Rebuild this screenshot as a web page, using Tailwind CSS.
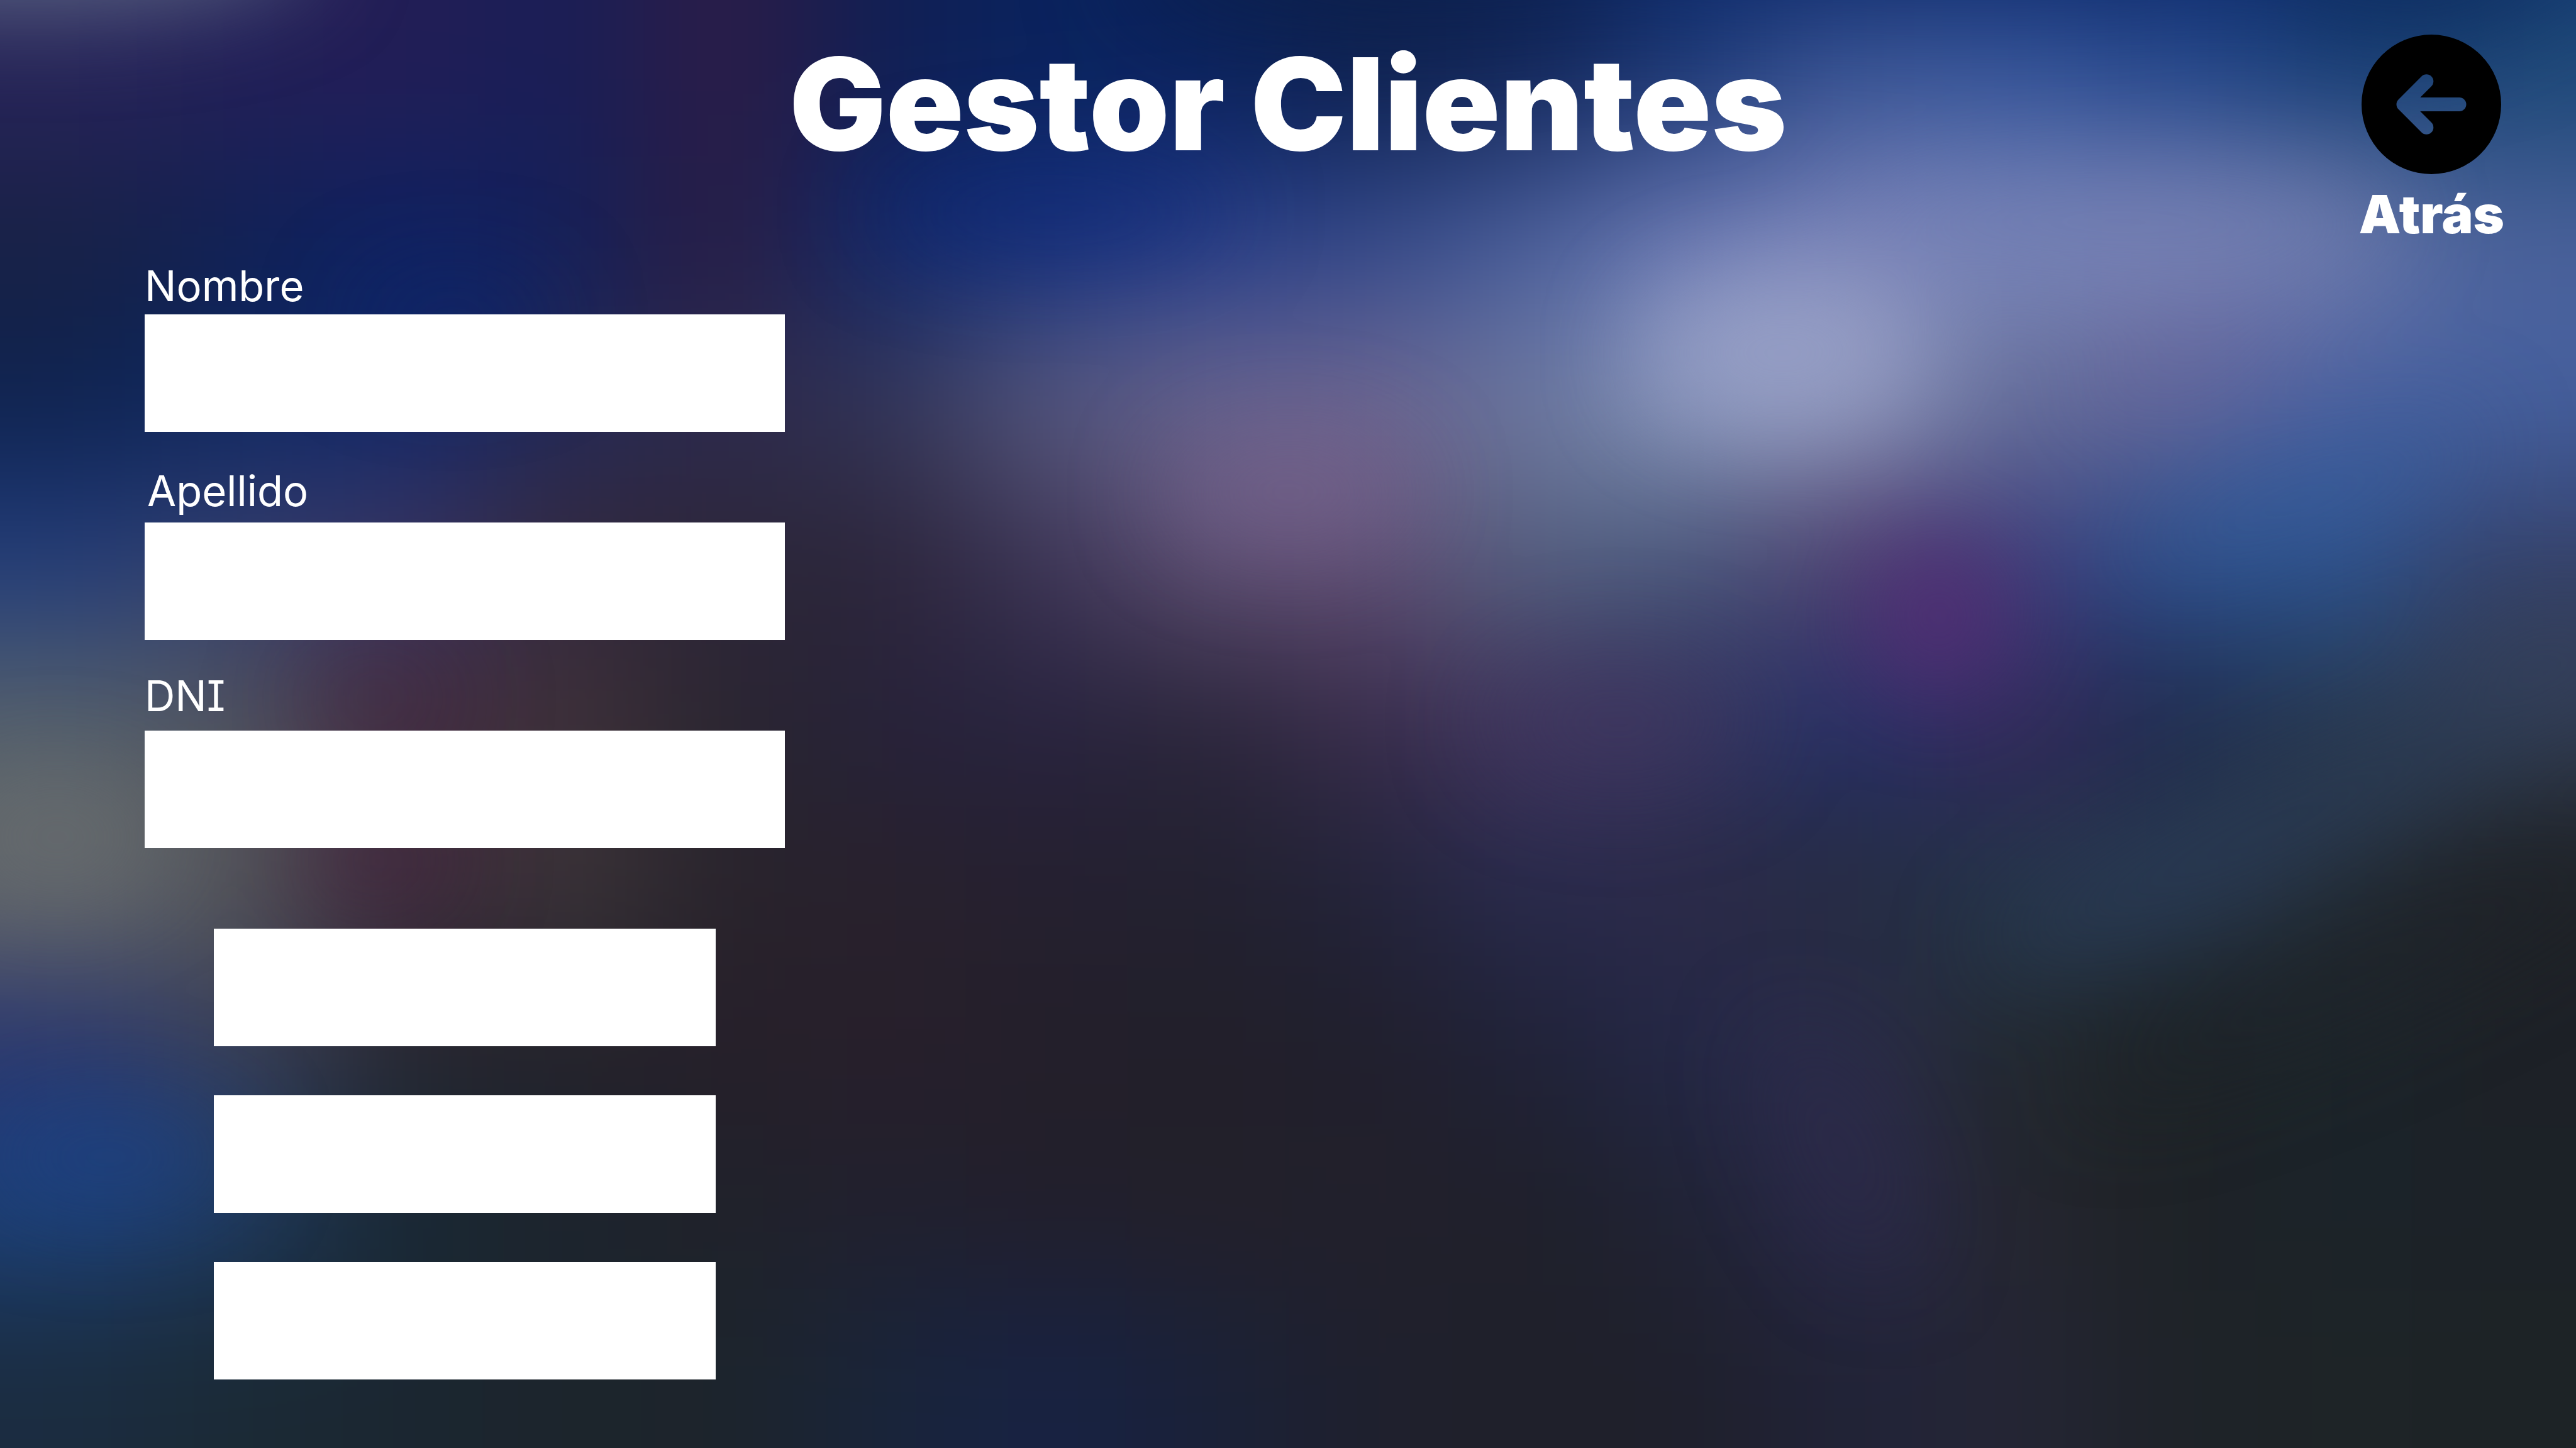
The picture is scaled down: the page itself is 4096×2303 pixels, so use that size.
<!DOCTYPE html>
<html lang="es">
<head>
<meta charset="utf-8">
<meta name="viewport" content="width=device-width, initial-scale=1">
<title>Gestor Clientes</title>
<script src="https://cdn.jsdelivr.net/npm/@tailwindcss/browser@4"></script>
</head>
<body class="min-h-screen bg-[#22202c] text-white">
<div class="relative isolate min-h-screen overflow-hidden">
  <!-- Backdrop: a 16 x 9 colour mesh, softened -->
  <svg class="absolute inset-0 -z-10 size-full" viewBox="0 0 1568 882" preserveAspectRatio="none" aria-hidden="true">
    <defs>
      <filter id="soft" filterUnits="userSpaceOnUse" x="-200" y="-200" width="1968" height="1282" color-interpolation-filters="sRGB"><feGaussianBlur stdDeviation="44"/></filter>
      <filter id="glow" filterUnits="userSpaceOnUse" x="-200" y="-200" width="1968" height="1282" color-interpolation-filters="sRGB"><feGaussianBlur stdDeviation="30"/></filter>
    </defs>
    <g id="mesh" filter="url(#soft)"></g>
    <g filter="url(#glow)">
      <ellipse cx="20" cy="-34" rx="170" ry="38" fill="#5d6784"/>
      <ellipse cx="1180" cy="375" rx="40" ry="46" fill="#552b76" opacity=".85"/>
      <ellipse cx="1085" cy="215" rx="85" ry="46" fill="#9fa8cc" opacity=".65"/>
      <ellipse cx="1290" cy="135" rx="170" ry="34" fill="#7c86b8" opacity=".45"/>
      <ellipse cx="785" cy="300" rx="75" ry="36" fill="#7c668f" opacity=".5"/>
      <ellipse cx="35" cy="510" rx="65" ry="38" fill="#6c7072" opacity=".55"/>
      <ellipse cx="65" cy="705" rx="80" ry="34" fill="#1b4288" opacity=".6"/>
      <ellipse cx="230" cy="425" rx="50" ry="26" fill="#452239" opacity=".4"/>
      <ellipse cx="230" cy="525" rx="46" ry="24" fill="#45223e" opacity=".6"/>
      <ellipse cx="1400" cy="305" rx="120" ry="22" fill="#335f9e" opacity=".45" transform="rotate(-20 1400 305)"/>
      <ellipse cx="1330" cy="222" rx="80" ry="16" fill="#655f97" opacity=".4" transform="rotate(-20 1330 222)"/>
      <ellipse cx="1380" cy="505" rx="190" ry="24" fill="#2c3d59" opacity=".8" transform="rotate(-25 1380 505)"/>
      <ellipse cx="1560" cy="400" rx="70" ry="34" fill="#35415c" opacity=".6"/>
      <ellipse cx="1440" cy="590" rx="190" ry="26" fill="#1e2228" opacity=".7" transform="rotate(-24 1440 590)"/>
      <ellipse cx="985" cy="440" rx="80" ry="40" fill="#42355f" opacity=".55"/>
      <ellipse cx="1200" cy="-26" rx="420" ry="34" fill="#0c2868" opacity=".9"/>
      <ellipse cx="840" cy="-14" rx="160" ry="30" fill="#0c1f4a" opacity=".8"/>
      <ellipse cx="1470" cy="-10" rx="80" ry="36" fill="#0d2c5c" opacity=".7"/>
      <ellipse cx="640" cy="128" rx="110" ry="26" fill="#0a2677" opacity=".5"/>
      <ellipse cx="275" cy="195" rx="60" ry="26" fill="#09246a" opacity=".5"/>
      <ellipse cx="1120" cy="700" rx="26" ry="80" fill="#2e2c4b" opacity=".6" transform="rotate(-25 1120 700)"/>
    </g>
  </svg>

  <header class="grid grid-cols-[1fr_auto_1fr] items-start px-[114px] pt-[45px] font-['Inter',sans-serif] font-black">
    <h1 class="col-start-2 text-[204px] leading-[240px]">Gestor Clientes</h1>
    <a href="#" class="mt-[10px] flex flex-col items-center justify-self-end">
      <svg class="size-[222px]" viewBox="2 2 20 20" aria-hidden="true">
        <mask id="arrow">
          <rect x="2" y="2" width="20" height="20" fill="#fff"/>
          <path d="M16 12H8.2M11.3 8.7L8 12l3.3 3.3" fill="none" stroke="#000" stroke-width="2" stroke-linecap="round" stroke-linejoin="round"/>
        </mask>
        <circle cx="12" cy="12" r="10" mask="url(#arrow)"/>
      </svg>
      <span class="mt-4 text-[84px] leading-[96px]">Atrás</span>
    </a>
  </header>

  <main class="px-[230px] pt-[26px]">
    <form class="w-[28%] font-['Inter',sans-serif]">
      <div class="flex flex-col gap-[5px]">
        <label for="nombre" class="text-[67px] leading-[80px]">Nombre</label>
        <input id="nombre" name="nombre" type="text" class="h-[187px] w-full bg-white px-8 text-[67px] text-black">
      </div>
      <div class="mt-[54px] flex flex-col gap-[10px]">
        <label for="apellido" class="pl-1 text-[67px] leading-[80px]">Apellido</label>
        <input id="apellido" name="apellido" type="text" class="h-[187px] w-full bg-white px-8 text-[67px] text-black">
      </div>
      <div class="mt-[49px] flex flex-col gap-[15px]">
        <label for="dni" class="text-[67px] leading-[80px] [font-feature-settings:'cv08']">DNI</label>
        <input id="dni" name="dni" type="text" class="h-[187px] w-full bg-white px-8 text-[67px] text-black">
      </div>
      <div class="mt-32 flex flex-col gap-[78px] px-[110px]">
        <button type="button" aria-label="Guardar" class="h-[187px] bg-white"></button>
        <button type="button" aria-label="Buscar" class="h-[187px] bg-white"></button>
        <button type="button" aria-label="Borrar" class="h-[187px] bg-white"></button>
      </div>
    </form>
  </main>
</div>
<script>
  const rows = [
    '272459 232058 231d56 181f57 2d1c46 101f54 0a235e 0a225e 0e214f 12265a 1b3876 3a5595 36559a 26488c 1a4078 1d4878',
    '182145 0f2154 0d2163 14205a 2a1d42 12296a 1b347f 293f8a 32488a 4a5f9c 6f7cb6 8088bd 7784b8 7a83b5 6e7cad 4c629b',
    '0e2350 0f2863 13296a 252a58 2e2a4c 333558 57597f 696690 706892 6c789f 8997bc 8a93b7 66709a 62659a 4a60a0 45609f',
    '233d7b 363f6e 3a3563 34283c 2c2638 2c253a 3c3455 5c4d70 5f4c72 54607f 48567a 4f3e6c 3d3c7a 2a4c88 2a5390 35416b',
    '56616b 50545f 422c40 403239 2a2530 26223a 28233f 2a253a 3a2d4c 3f345c 30345e 24306a 35275a 1f2c4e 28394f 303b4f',
    '646868 55565a 3e2a3c 3b3539 28232b 28212c 252030 22212f 22233a 292b4e 2c2a47 252b40 24364a 26364c 242e38 1f2226',
    '2a356e 3a4058 25262f 24222a 261f2a 281f2b 231f2a 221f2a 211f2c 202238 242848 2b2c4a 22292f 1d2326 1b2429 1d2127',
    '1c4178 1e3a5f 182834 1c242e 20222a 21202e 221f2b 23202a 22202b 1f202a 202335 29294a 25262f 1e2226 1b232a 1c2227',
    '1b2c40 1b2a35 1b2631 1c252c 1d242b 19243a 172244 1a2138 1f202d 1f202a 1f202c 212338 252635 1e2228 1e2427 1d2326'
  ].map(r => r.split(' '));
  const clamp = (v, max) => Math.min(Math.max(v, 0), max);
  const mesh = document.getElementById('mesh');
  for (let y = -2; y < 11; y++) {
    for (let x = -2; x < 18; x++) {
      const cell = document.createElementNS('http://www.w3.org/2000/svg', 'rect');
      cell.setAttribute('x', x * 98);
      cell.setAttribute('y', y * 98);
      cell.setAttribute('width', 99);
      cell.setAttribute('height', 99);
      cell.setAttribute('fill', '#' + rows[clamp(y, 8)][clamp(x, 15)]);
      mesh.appendChild(cell);
    }
  }
</script>
</body>
</html>
